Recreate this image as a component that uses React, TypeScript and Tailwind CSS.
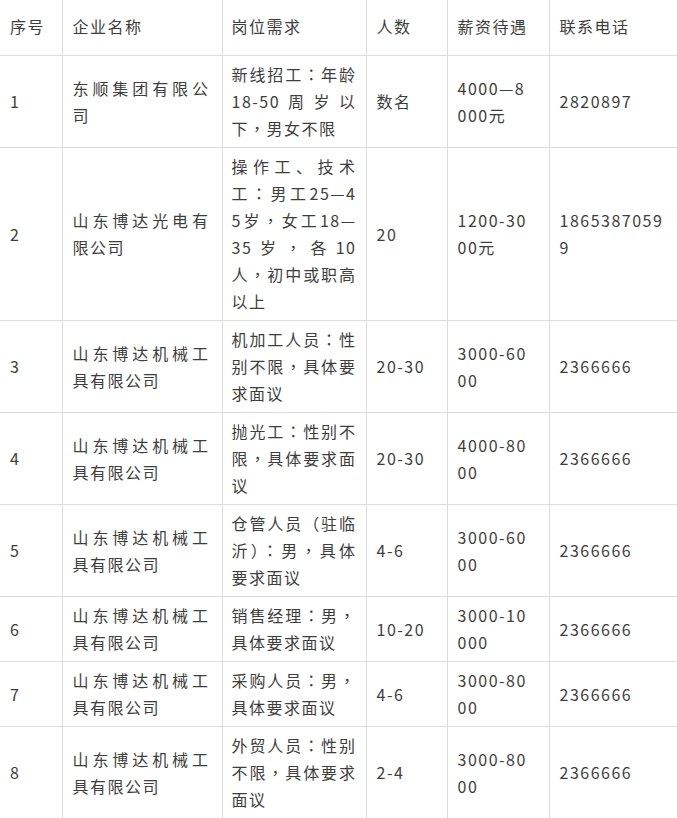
import React from 'react';

const headers = ['序号', '企业名称', '岗位需求', '人数', '薪资待遇', '联系电话'];

const company = '山东博达机械工具有限公司';

const rows: string[][] = [
  ['1', '东顺集团有限公司', '新线招工：年龄18-50周岁以下，男女不限', '数名', '4000—8000元', '2820897'],
  ['2', '山东博达光电有限公司', '操作工、技术工：男工25—45岁，女工18—35岁，各10人，初中或职高以上', '20', '1200-3000元', '18653870599'],
  ['3', company, '机加工人员：性别不限，具体要求面议', '20-30', '3000-6000', '2366666'],
  ['4', company, '抛光工：性别不限，具体要求面议', '20-30', '4000-8000', '2366666'],
  ['5', company, '仓管人员（驻临沂）：男，具体要求面议', '4-6', '3000-6000', '2366666'],
  ['6', company, '销售经理：男，具体要求面议', '10-20', '3000-10000', '2366666'],
  ['7', company, '采购人员：男，具体要求面议', '4-6', '3000-8000', '2366666'],
  ['8', company, '外贸人员：性别不限，具体要求面议', '2-4', '3000-8000', '2366666'],
];

// per-column padding, tuned so lines wrap where the original does
const colPad = [
  'pl-[10px] pr-[10px]',
  'pl-[10px] pr-[12px]',
  'pl-[9px] pr-[9px]',
  'pl-[10px] pr-[10px]',
  'pl-[10px] pr-[14px]',
  'pl-[10px] pr-[10px]',
];

// full-width punctuation sits centred in the original
const punct = /([：，（）])/;

function renderText(text: string) {
  return text.split(punct).map((part, i) => {
    if (!punct.test(part)) return part;
    const font = part === '（' || part === '）' ? '"Noto Sans CJK KR"' : '"Noto Sans CJK TC"';
    return (
      <span key={i} style={{ fontFamily: `${font}, sans-serif` }}>
        {part}
      </span>
    );
  });
}

const App: React.FC = () => {
  return (
    <div
      className="w-[677px] bg-white text-[#3e3e3e] text-[16px] leading-[27px] tracking-[1.5px]"
      style={{ fontFamily: '"Noto Sans CJK SC", "Noto Sans", sans-serif' }}
    >
      <table className="w-[677px] table-fixed border-collapse">
        <colgroup>
          <col className="w-[62px]" />
          <col className="w-[160px]" />
          <col className="w-[144px]" />
          <col className="w-[81px]" />
          <col className="w-[102px]" />
          <col className="w-[128px]" />
        </colgroup>
        <thead>
          <tr>
            {headers.map((h, i) => (
              <th
                key={h}
                className={`${colPad[i]} pt-[13px] pb-[15px] text-left font-normal align-middle border-[#dddddd] ${i > 0 ? 'border-l' : ''}`}
              >
                {h}
              </th>
            ))}
          </tr>
        </thead>
        <tbody>
          {rows.map((row, r) => (
            <tr key={r}>
              {row.map((cell, i) => (
                <td
                  key={i}
                  className={`${colPad[i]} py-[5px] align-middle text-justify break-all border-t border-[#dddddd] ${i > 0 ? 'border-l' : ''}`}
                >
                  {renderText(cell)}
                </td>
              ))}
            </tr>
          ))}
        </tbody>
      </table>
    </div>
  );
};

export default App;
